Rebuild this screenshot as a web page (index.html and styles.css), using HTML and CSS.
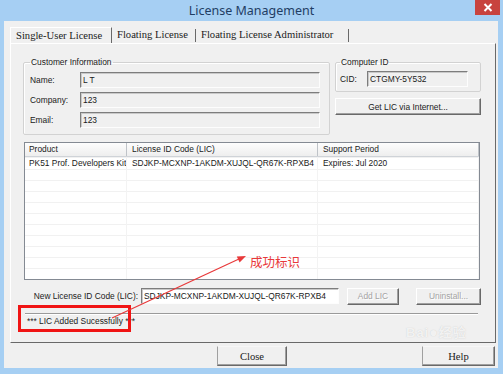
FILE: index.html
```html
<!DOCTYPE html>
<html>
  <head>
    <meta charset="utf-8">
    <link rel="stylesheet" href="styles.css">
  </head>
  <body>
    <div class="window">
      <div class="titlebar">
        <div class="title">License Management</div>
        <div class="close-x">
          <svg width="10" height="9" viewBox="0 0 10 9"><path d="M1.5 1 L8.5 8 M8.5 1 L1.5 8" stroke="#fff" stroke-width="2"/></svg>
        </div>
      </div>
      <div class="client">
        <div class="tabs">
          <div class="tab active">Single-User License</div>
          <div class="tab">Floating License</div>
          <div class="tab">Floating License Administrator</div>
        </div>
        <div class="panel">
          <div class="top-row">
            <fieldset class="group customer">
              <legend>Customer Information</legend>
              <div class="form-row"><span class="lbl">Name:</span><div class="field">L T</div></div>
              <div class="form-row"><span class="lbl">Company:</span><div class="field">123</div></div>
              <div class="form-row"><span class="lbl">Email:</span><div class="field">123</div></div>
            </fieldset>
            <div class="side">
              <fieldset class="group computer">
                <legend>Computer ID</legend>
                <div class="form-row cid"><span class="lbl">CID:</span><div class="field">CTGMY-5Y532</div></div>
              </fieldset>
              <button type="button" class="btn get-lic">Get LIC via Internet...</button>
            </div>
          </div>
          <div class="list">
            <div class="list-head">
              <div class="col c1">Product</div>
              <div class="col c2">License ID Code (LIC)</div>
              <div class="col c3">Support Period</div>
            </div>
            <div class="list-body">
              <div class="col c1">PK51 Prof. Developers Kit</div>
              <div class="col c2">SDJKP-MCXNP-1AKDM-XUJQL-QR67K-RPXB4</div>
              <div class="col c3">Expires: Jul 2020</div>
            </div>
          </div>
          <div class="new-lic">
            <span class="new-lic-label">New License ID Code (LIC):</span>
            <div class="field white">SDJKP-MCXNP-1AKDM-XUJQL-QR67K-RPXB4</div>
            <button type="button" class="btn disabled add-lic">Add LIC</button>
            <button type="button" class="btn disabled uninstall">Uninstall...</button>
          </div>
          <div class="status">*** LIC Added Sucessfully ***</div>
        </div>
        <div class="footer">
          <button type="button" class="btn dlg close-btn">Close</button>
          <button type="button" class="btn dlg help-btn">Help</button>
        </div>
      </div>

      <!-- annotation drawn over the screenshot -->
      <div class="mark-box"></div>
      <svg class="mark-arrow" width="503" height="374" viewBox="0 0 503 374">
        <line x1="112" y1="318" x2="240" y2="258.5" stroke="#e8393a" stroke-width="1.2"/>
        <polygon points="246,256 239.6,262.6 236.8,256.4" fill="#e8393a"/>
      </svg>
      <div class="mark-text">成功标识</div>
      <div class="watermark">Bai<span class="paw">●</span>经验</div>
    </div>
  </body>
</html>
```

FILE: styles.css
```css
:root {
  --frame: #a6cff3;
  --face: #f0f0f0;
  --shadow: #a0a0a0;
  --dark-shadow: #696969;
  --mark-red: #e8393a;
}
* { box-sizing: border-box; }
body {
  margin: 0;
  background-color: var(--frame);
  font-family: "Liberation Sans", Arial, sans-serif;
  font-size: 8.4px;
  color: #1a1a1a;
}
.window {
  position: relative;
  width: 503px;
  height: 374px;
  display: flex;
  flex-direction: column;
  overflow: hidden;
}

/* title bar */
.titlebar {
  height: 21px;
  display: flex;
}
.title {
  flex: 1;
  padding-left: 28px;
  text-align: center;
  line-height: 21px;
  font-family: "Noto Sans", "Liberation Sans", sans-serif;
  font-size: 12.5px;
  color: #1f3d63;
}
.close-x {
  width: 25px;
  height: 15px;
  margin-right: 3px;
  background-color: #c8433e;
  display: flex;
  align-items: center;
  justify-content: center;
}

/* client area */
.client {
  flex: 1;
  margin: 0 5px 6px 4px;
  background-color: var(--face);
  padding: 4px 0 0 6px;
  display: flex;
  flex-direction: column;
}
.tabs {
  height: 18px;
  display: flex;
  align-items: flex-end;
}
.tab {
  font-family: "Liberation Serif", "Times New Roman", serif;
  font-size: 10.6px;
  height: 13px;
  line-height: 12px;
  padding: 0 4px 0 4px;
  border-right: 1px solid var(--dark-shadow);
  margin-bottom: 1px;
}
.tab.active {
  height: 16px;
  line-height: 16px;
  padding: 0 4px 0 5px;
  border-top: 1px solid #fff;
  border-left: 1px solid #fff;
  margin-bottom: 0;
  width: 102px;
}
.tab:nth-child(2) { width: 84px; padding-left: 5px; }
.tab:nth-child(3) { width: 153px; padding-left: 5px; }

.panel {
  width: 486px;
  height: 300px;
  border-top: 1px solid #fff;
  border-left: 1px solid #fff;
  border-right: 1px solid var(--dark-shadow);
  border-bottom: 1px solid var(--dark-shadow);
  padding: 12px 0 0 12px;
  display: flex;
  flex-direction: column;
}

/* group boxes */
.top-row {
  display: flex;
  gap: 5px;
  align-items: flex-start;
}
.group {
  margin: 0;
  min-width: 0;
  border: 1px solid #d2d2d2;
  border-radius: 2px;
  box-shadow: inset 1px 1px #fff;
}
.group legend {
  padding: 0 1px;
  height: 12px;
  line-height: 12px;
}
.customer {
  width: 307px;
  padding: 4px 9px 6px 6px;
  display: flex;
  flex-direction: column;
  gap: 4px;
}
.computer {
  width: 146px;
  padding: 3px 12px 4px 4px;
}
.form-row {
  display: grid;
  grid-template-columns: 50px 1fr;
  align-items: center;
}
.form-row.cid { grid-template-columns: 27px 1fr; }
.field {
  height: 16px;
  line-height: 14px;
  padding-left: 2px;
  border: 1px solid;
  border-color: #7d7d7d #fdfdfd #fdfdfd #7d7d7d;
  box-shadow: inset 1px 1px #c9c9c9;
  white-space: nowrap;
  overflow: hidden;
}
.field.white { background-color: #fff; }

.side {
  width: 146px;
  display: flex;
  flex-direction: column;
  gap: 6px;
}

/* buttons */
.btn {
  font-family: inherit;
  font-size: 8.4px;
  color: #1a1a1a;
  background-color: var(--face);
  border: 1px solid;
  border-color: #fff var(--dark-shadow) var(--dark-shadow) #fff;
  box-shadow: inset -1px -1px var(--shadow);
  padding: 0;
  margin: 0;
}
.get-lic { height: 17px; width: 146px; }
.btn.disabled {
  color: #a3a3a3;
  text-shadow: 1px 1px #fff;
  height: 17px;
}
.btn.dlg {
  font-family: "Liberation Serif", "Times New Roman", serif;
  font-size: 10.6px;
  height: 20px;
  border-color: #f6f6f6 var(--dark-shadow) var(--dark-shadow) var(--shadow);
}

/* list view */
.list {
  margin: 7px 0 0 1px;
  width: 456px;
  height: 138px;
  border: 1px solid #848a93;
  background-color: #fff;
  display: flex;
  flex-direction: column;
}
.list-head {
  height: 14px;
  display: flex;
  background: linear-gradient(#fdfdfd, #eeeeee);
  border-bottom: 1px solid #cfd3d8;
}
.list-head .col {
  line-height: 13px;
  border-right: 1px solid #bfc3c8;
}
.list-body {
  flex: 1;
  display: flex;
  background: repeating-linear-gradient(to bottom, transparent 0 10px, #f1f1f1 10px 11px);
  background-position: 0 2px;
}
.list-body .col {
  line-height: 12px;
  border-right: 1px solid #f3f3f3;
}
.col { padding-left: 5px; white-space: nowrap; overflow: hidden; }
.c1 { width: 102px; padding-left: 4px; }
.c2 { width: 191px; }
.c3 { width: 161px; border-right: none; }

/* new lic row */
.new-lic {
  margin-top: 8px;
  height: 16px;
  display: flex;
  align-items: center;
}
.new-lic-label {
  width: 115px;
  text-align: right;
  margin-right: 3px;
}
.new-lic .field { width: 198px; }
.add-lic { width: 52px; margin-left: 8px; }
.uninstall { width: 65px; margin-left: 17px; }

.status {
  margin: 9px 0 0 2px;
  width: 453px;
  height: 16px;
  padding-left: 2px;
  line-height: 14px;
  border-top: 1px solid #9a9a9a;
  box-shadow: inset 0 1px #fff;
}

.footer {
  margin-top: 3px;
  display: flex;
}
.close-btn { width: 70px; margin-left: 207px; }
.help-btn { width: 73px; margin-left: auto; margin-right: 3px; }

/* annotation overlays */
.mark-box {
  position: absolute;
  left: 18px;
  top: 305px;
  width: 113px;
  height: 27px;
  border: 3px solid #f01414;
}
.mark-arrow {
  position: absolute;
  left: 0;
  top: 0;
  pointer-events: none;
}
.mark-text {
  position: absolute;
  left: 250px;
  top: 253px;
  font-family: "Noto Sans CJK SC", sans-serif;
  font-size: 12.5px;
  line-height: 17px;
  color: var(--mark-red);
}
.watermark {
  position: absolute;
  left: 406px;
  top: 322px;
  font-family: "Liberation Sans", "Noto Sans CJK SC", sans-serif;
  font-size: 13px;
  font-weight: bold;
  color: rgba(255, 255, 255, 0.75);
  text-shadow: 0 0 1px rgba(160, 160, 160, 0.5);
  letter-spacing: 1px;
}
.watermark .paw { font-size: 14px; }
```
